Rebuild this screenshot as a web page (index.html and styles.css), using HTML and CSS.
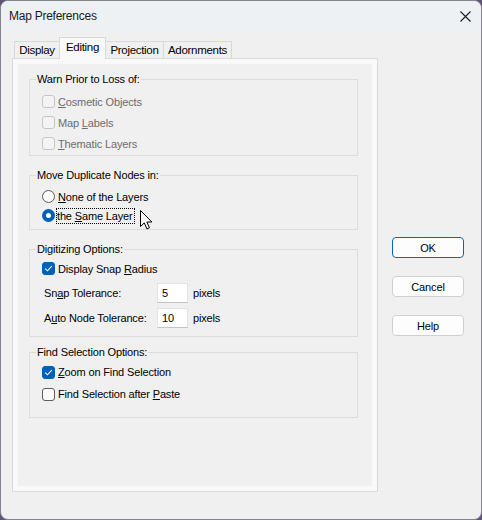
FILE: index.html
```html
<!DOCTYPE html>
<html lang="en">
<head>
<meta charset="utf-8">
<title>Map Preferences</title>
<link rel="stylesheet" href="styles.css">
</head>
<body>
<div class="window">
  <div class="titlebar">
    <span class="title">Map Preferences</span>
    <span class="close" aria-label="Close">
      <svg width="11" height="11" viewBox="0 0 11 11"><path d="M0.5 0.5 L10.5 10.5 M10.5 0.5 L0.5 10.5" stroke="#1b1b1b" stroke-width="1.1" fill="none"/></svg>
    </span>
  </div>

  <div class="client">
    <div class="tabs-area">
      <div class="tabstrip">
        <div class="tab t-display">Display</div>
        <div class="tab t-editing active">Editing</div>
        <div class="tab t-projection">Projection</div>
        <div class="tab t-adornments">Adornments</div>
      </div>
      <div class="page">
        <div class="page-inner">

          <fieldset class="group g-warn disabled">
            <legend>Warn Prior to Loss of:</legend>
            <div class="row"><span class="box"></span><span class="lbl"><u>C</u>osmetic Objects</span></div>
            <div class="row"><span class="box"></span><span class="lbl">Map <u>L</u>abels</span></div>
            <div class="row"><span class="box"></span><span class="lbl"><u>T</u>hematic Layers</span></div>
          </fieldset>

          <fieldset class="group g-move">
            <legend>Move Duplicate Nodes in:</legend>
            <div class="row rrow"><span class="radio"></span><span class="lbl"><u>N</u>one of the Layers</span></div>
            <div class="row rrow"><span class="radio on"></span><span class="lbl focus">the <u>S</u>ame Layer</span></div>
          </fieldset>

          <fieldset class="group g-digit">
            <legend>Digitizing Options:</legend>
            <div class="row"><span class="box on"><svg width="13" height="13" viewBox="0 0 13 13"><path d="M3.2 6.6 L5.4 8.8 L9.8 4.2" stroke="#fff" stroke-width="1.1" fill="none"/></svg></span><span class="lbl">Display Snap <u>R</u>adius</span></div>
            <div class="field"><span class="flabel">Sn<u>a</u>p Tolerance:</span><span class="input">5</span><span class="unit">pixels</span></div>
            <div class="field"><span class="flabel">A<u>u</u>to Node Tolerance:</span><span class="input">10</span><span class="unit">pixels</span></div>
          </fieldset>

          <fieldset class="group g-find">
            <legend>Find Selection Options:</legend>
            <div class="row frow"><span class="box on"><svg width="13" height="13" viewBox="0 0 13 13"><path d="M3.2 6.6 L5.4 8.8 L9.8 4.2" stroke="#fff" stroke-width="1.1" fill="none"/></svg></span><span class="lbl"><u>Z</u>oom on Find Selection</span></div>
            <div class="row frow"><span class="box"></span><span class="lbl">Find Selection after <u>P</u>aste</span></div>
          </fieldset>

        </div>
      </div>
    </div>

    <div class="buttons">
      <div class="btn default">OK</div>
      <div class="btn">Cancel</div>
      <div class="btn">Help</div>
    </div>
  </div>

  <svg class="pointer" width="14" height="21" viewBox="0 0 14 21">
    <path d="M0.5 0.5 L0.5 16.5 L4.3 12.9 L6.9 18.9 L9.4 17.8 L6.9 12 L11.9 12 Z" fill="#fff" stroke="#000" stroke-width="1" stroke-linejoin="miter"/>
  </svg>
</div>
</body>
</html>
```

FILE: styles.css
```css
* { box-sizing: border-box; }

html, body {
  margin: 0;
  padding: 0;
  background: #5e5478;
}

body {
  font-family: "Liberation Sans", Arial, sans-serif;
  font-size: 11px;
  letter-spacing: -0.15px;
  color: #000;
}

.window {
  position: relative;
  width: 482px;
  height: 520px;
  border: 1px solid #85838c;
  border-radius: 8px;
  overflow: hidden;
  background: #f0f0f0;
  display: flex;
  flex-direction: column;
}

/* title bar */
.titlebar {
  height: 31px;
  flex: none;
  background: #eef1f4;
  display: flex;
  align-items: center;
  justify-content: space-between;
  padding: 0 10px 2px 8px;
}

.title {
  font-size: 12px;
  letter-spacing: -0.25px;
  color: #1a1a1a;
}

.close {
  display: flex;
  margin-top: 2px;
}

/* client area */
.client {
  flex: 1;
  display: flex;
  padding: 5px 0 0 11px;
  gap: 14px;
}

.tabs-area {
  width: 366px;
  display: flex;
  flex-direction: column;
}

.tabstrip {
  height: 21px;
  display: flex;
  align-items: flex-end;
  padding-left: 2px;
  position: relative;
  z-index: 1;
}

.tab {
  height: 17px;
  border: 1px solid #d9d9d9;
  border-bottom: none;
  background: #f0f0f0;
  display: flex;
  align-items: center;
  justify-content: center;
  margin-left: -1px;
  padding-bottom: 1px;
  font-size: 11.5px;
  letter-spacing: -0.3px;
}

.tab:first-child { margin-left: 0; }

.t-display { width: 46px; }
.t-editing { width: 47px; }
.t-projection { width: 59px; }
.t-adornments { width: 69px; }

.tab.active {
  height: 22px;
  margin-bottom: -1px;
  background: #f9f9f9;
  padding-bottom: 4px;
  position: relative;
  z-index: 2;
}

.page {
  height: 434px;
  border: 1px solid #dadada;
  background: #f9f9f9;
  padding: 5px;
  display: flex;
}

.page-inner {
  flex: 1;
  background: #f0f0f0;
  padding: 0 14px 0 11px;
}

/* group boxes */
.group {
  margin: 0;
  min-width: 0;
  border: 1px solid #dcdcdc;
  padding: 0 0 0 12px;
}

.group legend {
  margin-left: -6px;
  padding: 0 1px;
  line-height: 14px;
  height: 14px;
}

.g-warn  { margin-top: 8px;  padding-top: 5px; padding-bottom: 1px; }
.g-move  { margin-top: 12px; padding-top: 5px; padding-bottom: 4px; }
.g-digit { margin-top: 12px; padding-top: 2px; padding-bottom: 8px; }
.g-find  { margin-top: 8px;  padding-top: 2px; padding-bottom: 12px; }

.row {
  height: 21px;
  display: flex;
  align-items: center;
}

.rrow { height: 19px; }
.frow { height: 22px; }

.lbl { margin-left: 3px; white-space: nowrap; }

.lbl.focus {
  margin-left: 2px;
  padding: 1px 1px 1px 0;
  outline: 1px dotted #000;
  outline-offset: 0;
  line-height: 12px;
}

.disabled .lbl { color: #6d6d6d; }

/* checkboxes */
.box {
  width: 13px;
  height: 13px;
  flex: none;
  border: 1px solid #5b5b5b;
  border-radius: 3px;
  background: #fbfbfb;
  display: flex;
  align-items: center;
  justify-content: center;
}

.box svg { margin: -1px; }

.box.on {
  border-color: #005fb8;
  background: #005fb8;
}

.disabled .box {
  border-color: #c6c6c6;
  background: #f4f4f4;
}

/* radio buttons */
.radio {
  width: 13px;
  height: 13px;
  flex: none;
  border: 1px solid #5b5b5b;
  border-radius: 50%;
  background: #fbfbfb;
}

.radio.on {
  border: 4px solid #005fb8;
  background: #fff;
}

/* numeric fields */
.field {
  height: 21px;
  margin-top: 3px;
  display: flex;
  align-items: center;
  padding-left: 2px;
}

.field + .field { margin-top: 4px; }

.flabel { width: 113px; white-space: nowrap; }

.input {
  width: 31px;
  height: 20px;
  background: #fff;
  border: 1px solid #e3e3e3;
  border-bottom-color: #c4c4c4;
  padding-left: 4px;
  display: flex;
  align-items: center;
}

.unit { margin-left: 5px; }

/* dialog buttons */
.buttons {
  display: flex;
  flex-direction: column;
  gap: 18px;
  padding-top: 200px;
}

.btn {
  width: 72px;
  height: 21px;
  border: 1px solid #d0d0d0;
  border-radius: 4px;
  background: #fdfdfd;
  display: flex;
  align-items: center;
  justify-content: center;
}

.btn.default {
  border-color: #0067c0;
}

/* mouse pointer resting over the radio group */
.pointer {
  position: absolute;
  left: 139px;
  top: 209px;
}
```
